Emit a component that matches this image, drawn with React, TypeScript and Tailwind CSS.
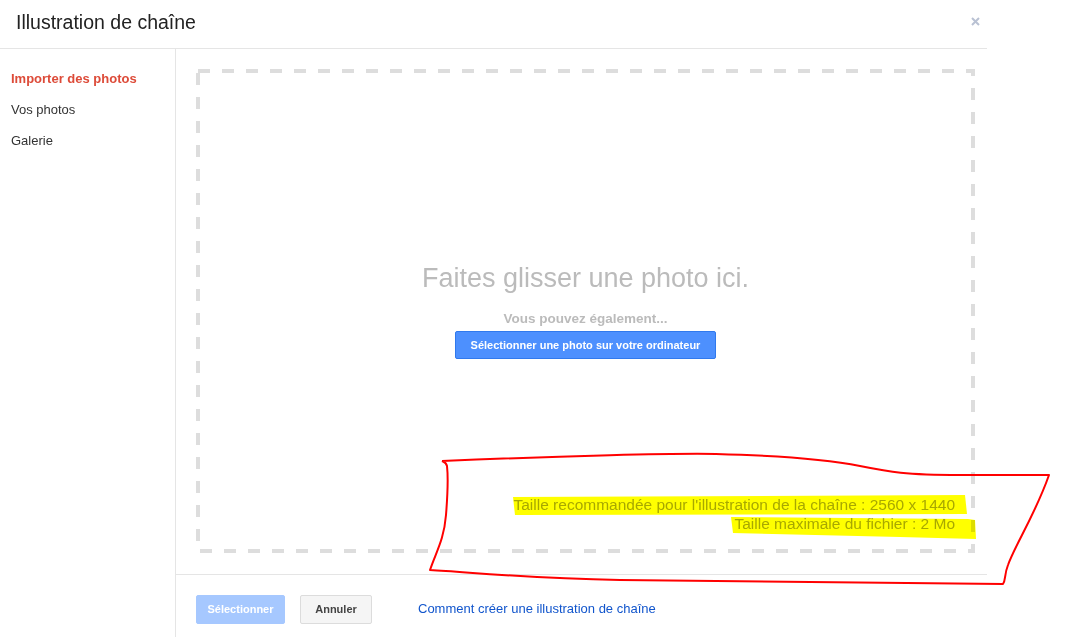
export default function App() {
  const font = { fontFamily: '"Liberation Sans", Arial, sans-serif' };
  return (
    <div className="relative w-[1080px] h-[637px] bg-white overflow-hidden" style={font}>
      <div className="w-[987px] h-full flex flex-col">
        {/* header */}
        <div className="h-[49px] shrink-0 border-b border-[#e5e5e5] flex items-center justify-between pl-[16px] pr-[7px]">
          <h1 className="text-[19.5px] text-[#222] leading-none -mt-[2px]">Illustration de chaîne</h1>
          <svg width="9" height="9" viewBox="0 0 9 9" className="-mt-[6px]">
            <path d="M1 1 L8 8 M8 1 L1 8" stroke="#b9c1d3" strokeWidth="2" />
          </svg>
        </div>

        <div className="flex flex-1 min-h-0">
          {/* sidebar */}
          <div className="w-[176px] shrink-0 border-r border-[#e5e5e5] pt-[22px] flex flex-col gap-[15px] pl-[11px] text-[13px] leading-[16px]">
            <div className="font-bold text-[#dd4b39]">Importer des photos</div>
            <div className="text-[#333]">Vos photos</div>
            <div className="text-[#333]">Galerie</div>
          </div>

          {/* main */}
          <div className="flex-1 flex flex-col">
            <div className="h-[525px] pt-[20px] pl-[20px] pr-[12px] pb-[21px]">
              <div className="relative h-full flex flex-col">
                <svg className="absolute inset-0" width="779" height="484" viewBox="0 0 779 484">
                  <rect x="2" y="2" width="775" height="480" fill="none" stroke="#dddddd" strokeWidth="4" strokeDasharray="12 12" />
                </svg>
                <div className="flex-1 flex flex-col items-center pt-[194px]">
                  <div className="text-[27px] leading-[30px] text-[#bbbbbb]">Faites glisser une photo ici.</div>
                  <div className="mt-[18px] text-[13.5px] font-bold text-[#bbbbbb] leading-[16px]">Vous pouvez également...</div>
                  <button className="mt-[4px] h-[28px] px-[15px] rounded-[2px] bg-[#4d90fe] border border-[#3079ed] text-white text-[11px] font-bold">
                    Sélectionner une photo sur votre ordinateur
                  </button>
                </div>
                <div className="relative pr-[20px] pb-[20px] text-right text-[15.5px] leading-[19px] text-[#a8a8a8]">
                  <div>Taille recommandée pour l'illustration de la chaîne : 2560 x 1440</div>
                  <div>Taille maximale du fichier : 2 Mo</div>
                </div>
              </div>
            </div>

            {/* footer */}
            <div className="flex-1 border-t border-[#e5e5e5] pt-[20px] pl-[20px] flex items-start">
              <button className="h-[29px] w-[89px] rounded-[2px] bg-[#a6c8ff] border border-[#a6c8ff] text-white text-[11px] font-bold">
                Sélectionner
              </button>
              <button className="ml-[15px] h-[29px] w-[72px] rounded-[2px] bg-[#f5f5f5] border border-[#dcdcdc] text-[#444] text-[11px] font-bold">
                Annuler
              </button>
              <a className="ml-[46px] mt-[6px] text-[13px] text-[#1155cc] leading-[16px]">Comment créer une illustration de chaîne</a>
            </div>
          </div>
        </div>
      </div>

      {/* annotation drawn over the screenshot */}
      <svg className="absolute inset-0 pointer-events-none mix-blend-multiply" width="1080" height="637" viewBox="0 0 1080 637">
        <path d="M513 497 L965 495 L967 514 L515 515 Z" fill="#ffff00" />
        <path d="M731 517 L968 519 L975 520 L976 539 L900 537 L733 533 Z" fill="#ffff00" />
      </svg>
      <svg className="absolute inset-0 pointer-events-none" width="1080" height="637" viewBox="0 0 1080 637">
        <path
          d="M442 461 C560 456 680 453 716 454 C790 456 830 460 860 466 C890 472 905 475 960 475 L1049 475 C1035 515 1015 545 1008 565 C1004 575 1006 580 1003 584 C860 583 720 581 620 580 C520 578 470 572 430 570 C436 552 444 540 446 515 C448 490 448 475 447 466 C446 462 444 462 442 461"
          fill="none"
          stroke="#ff0000"
          strokeWidth="2"
          strokeLinejoin="round"
        />
      </svg>
    </div>
  );
}
